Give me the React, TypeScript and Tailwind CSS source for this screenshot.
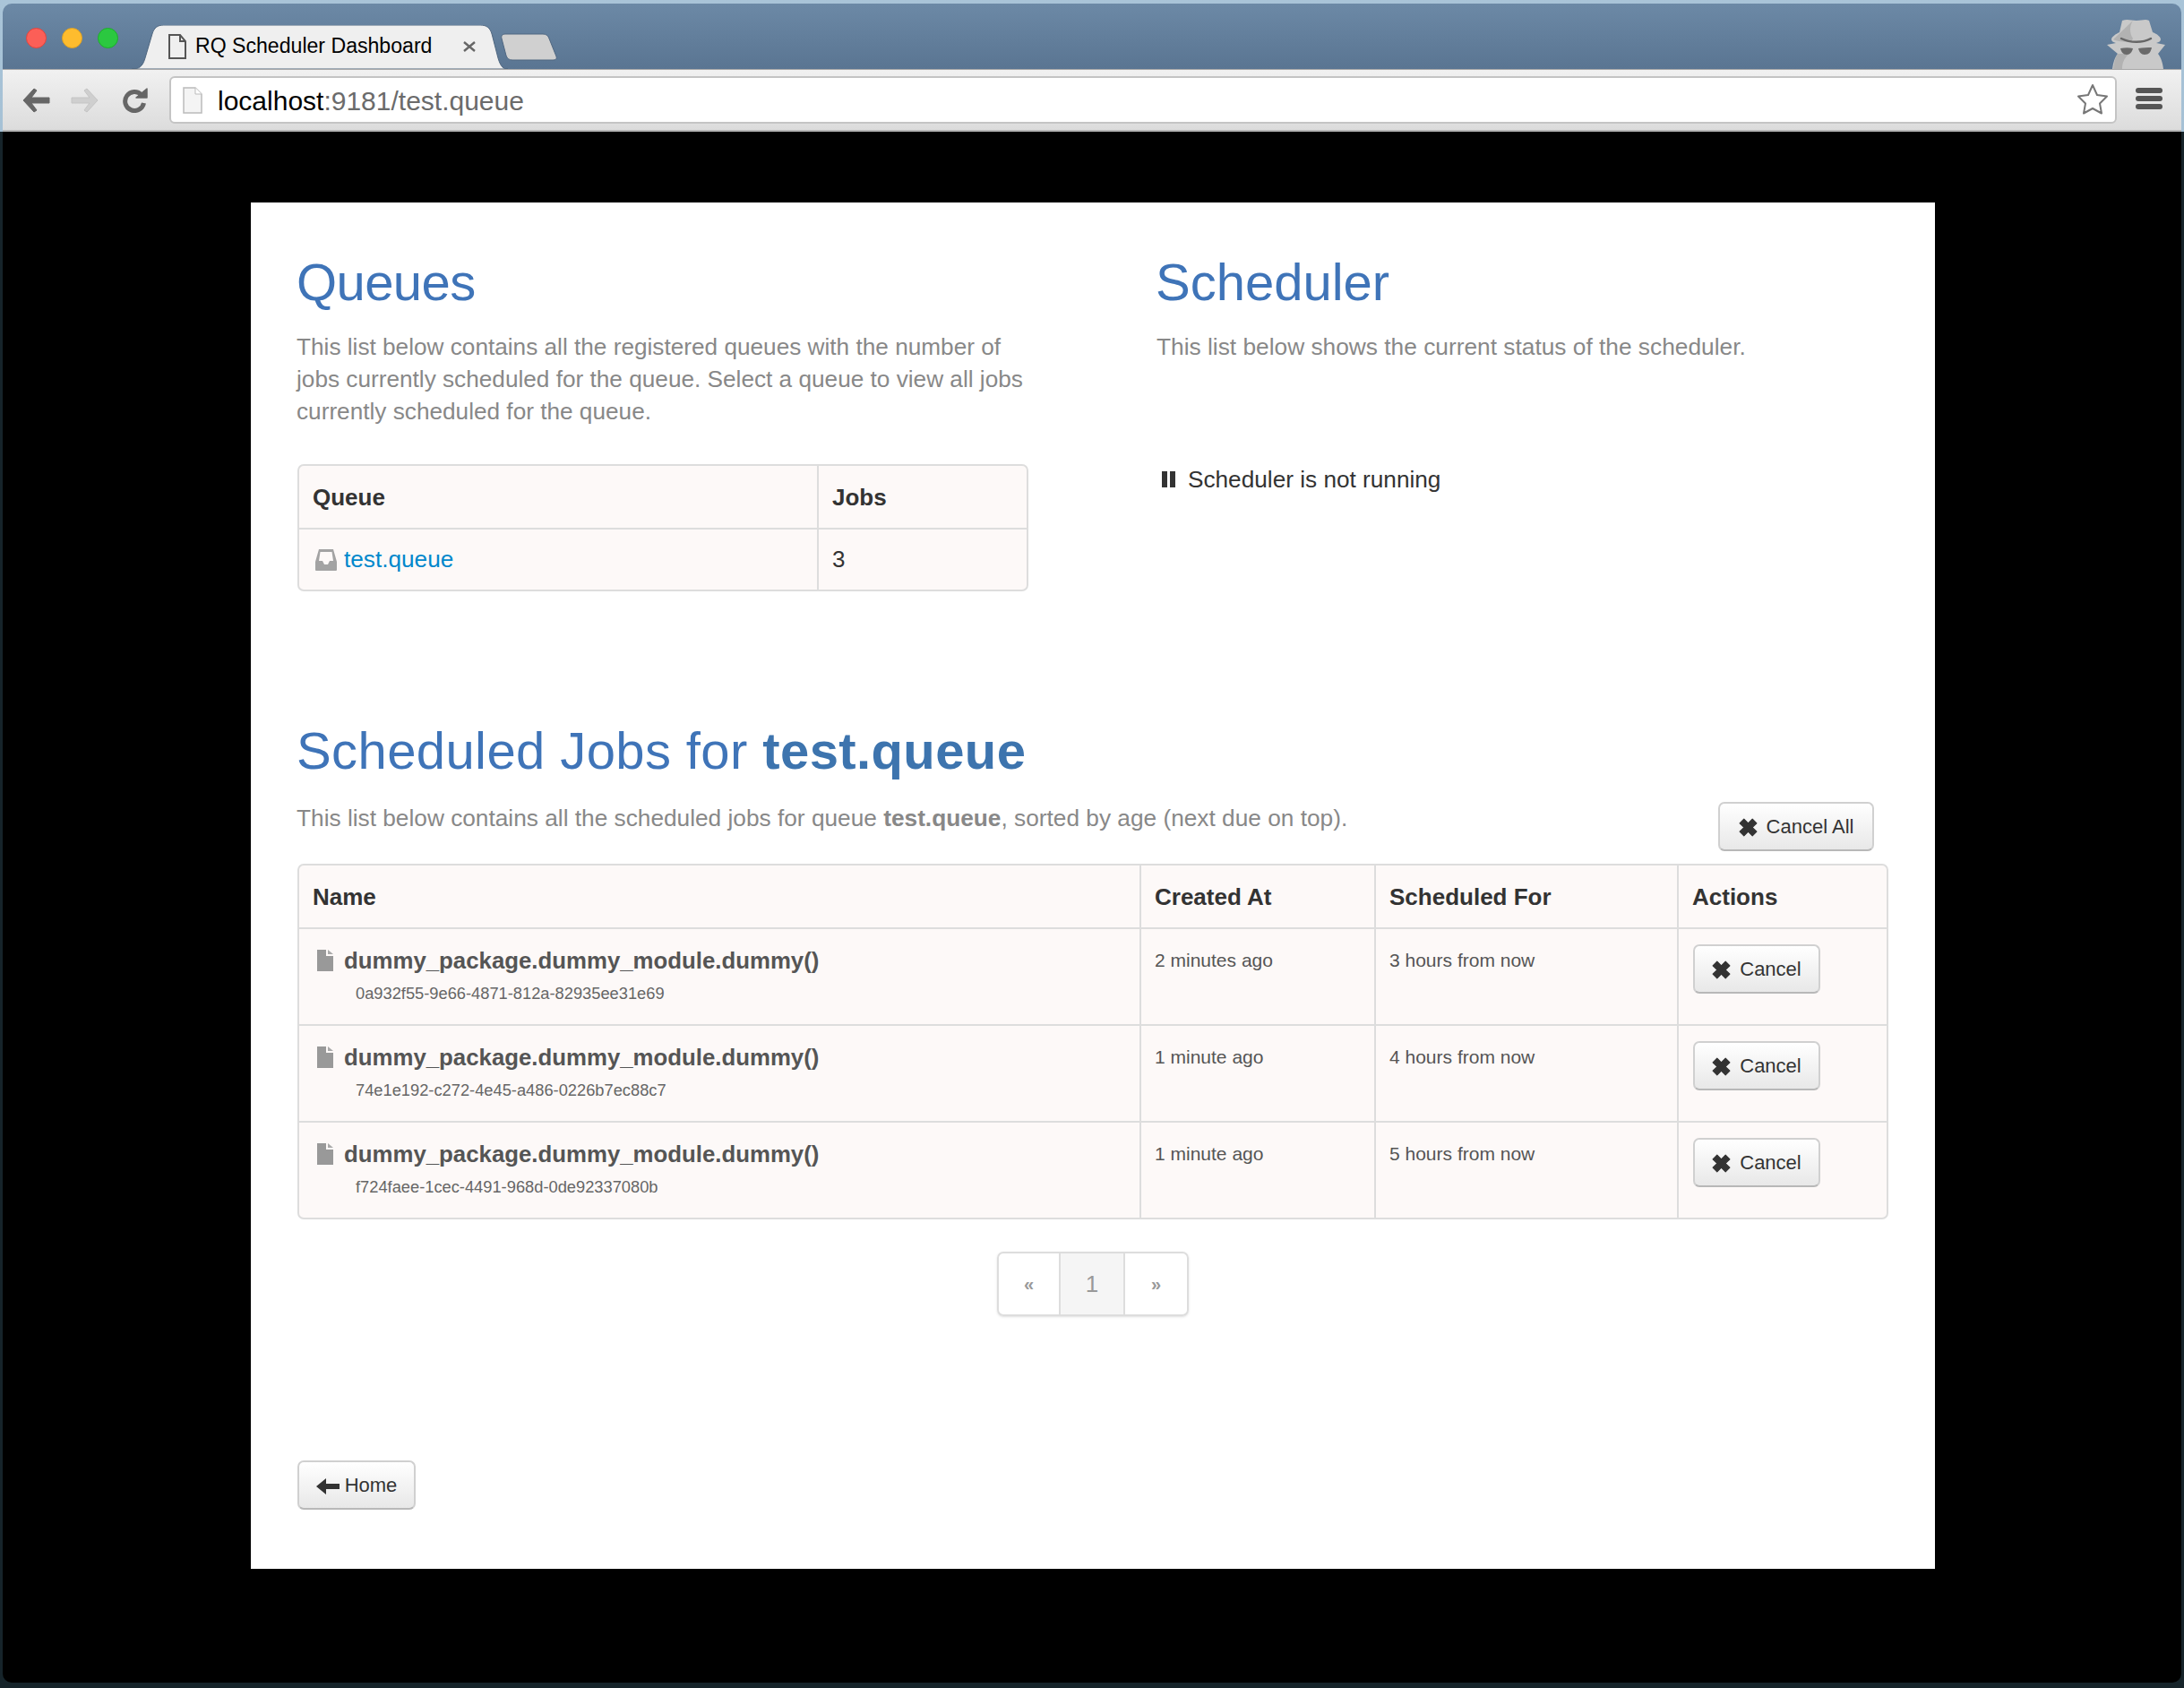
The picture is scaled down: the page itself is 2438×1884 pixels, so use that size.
import React from 'react';

const SANS = "font-['Liberation_Sans',Arial,sans-serif]";

const jobs = [
  { id: '0a932f55-9e66-4871-812a-82935ee31e69', created: '2 minutes ago', due: '3 hours from now' },
  { id: '74e1e192-c272-4e45-a486-0226b7ec88c7', created: '1 minute ago', due: '4 hours from now' },
  { id: 'f724faee-1cec-4491-968d-0de92337080b', created: '1 minute ago', due: '5 hours from now' },
];

const RemoveIcon = () => (
  <svg viewBox="0 0 20 20" className="w-[21px] h-[21px] shrink-0 mt-[2px]" fill="#333">
    <path d="M1 5.500 5.500 1 10 5.500 14.500 1 19 5.500 14.500 10 19 14.500 14.500 19 10 14.500 5.500 19 1 14.500 5.500 10Z" stroke="#333" strokeLinejoin="round" />
  </svg>
);

const FileIcon = () => (
  <svg viewBox="0 0 18 24" className="w-[18px] h-6 shrink-0">
    <path d="M0 0h10v7h8v17H0Z" fill="#999" />
    <path d="M12 0l6 5h-6Z" fill="#aaa" />
  </svg>
);

const InboxIcon = () => (
  <svg viewBox="0 0 24 24" className="w-6 h-6 shrink-0">
    <path fillRule="evenodd" d="M4 0h16l4 14v9a1 1 0 0 1-1 1H1a1 1 0 0 1-1-1V14L4 0Zm1.500 3L4 13h4l2 4h4l2-4h4L18.500 3Z" fill="#a3a3a3" />
  </svg>
);

const Button = ({ icon, label, className }: { icon: React.ReactNode; label: string; className: string }) => (
  <div className={`flex items-center justify-center gap-[10px] h-[55px] rounded-[7px] border-2 border-[#d0d0d0] border-b-[#b8b8b8] bg-gradient-to-b from-white to-[#e8e8e8] text-[22px] text-[#333] ${className}`}>
    {icon}
    <span>{label}</span>
  </div>
);

const Th = ({ children, last }: { children: React.ReactNode; last?: boolean }) => (
  <div className={`flex items-center px-[15px] pt-[2px] text-[26px] font-bold text-[#333] ${last ? '' : 'border-r-2 border-[#ddd]'}`}>{children}</div>
);

const ChromeBar = () => (
  <div className="relative h-[143px] mx-[3px] mt-[4px] rounded-t-[10px] overflow-hidden shrink-0">
    <div className="relative h-[73px] bg-gradient-to-b from-[#6c89a6] to-[#5a7592]">
      <div className="absolute left-[26px] top-[27px] w-[23px] h-[23px] rounded-full bg-[#fc5f57] border border-[#e0443e]" />
      <div className="absolute left-[66px] top-[27px] w-[23px] h-[23px] rounded-full bg-[#febc2e] border border-[#dea123]" />
      <div className="absolute left-[106px] top-[27px] w-[23px] h-[23px] rounded-full bg-[#2bc840] border border-[#1dad2b]" />
      {/* tab */}
      <svg className="absolute left-[144px] top-[24px]" width="420" height="49" viewBox="0 0 422 49" preserveAspectRatio="none">
        <path d="M0 49c8 0 12-2 15-12l8-27C25 3 29 0 36 0h355c7 0 11 3 13 10l7 27c3 10 6 12 11 12Z" fill="#efefef" stroke="#4f6680" strokeWidth="1" />
      </svg>
      <svg className="absolute left-[556px] top-[33px]" width="63" height="31" viewBox="0 0 63 31">
        <path d="M5 1h42c4 0 6 2 7 5l8 20c1 3-1 4-4 4H13c-4 0-6-2-7-5L1 6C0 3 2 1 5 1Z" fill="#d0d0d0" stroke="#4f6680" strokeWidth="1" />
      </svg>
      <svg className="absolute left-[185px] top-[34px]" width="20" height="28" viewBox="0 0 20 28">
        <path d="M1 1h12l6 7v19H1Z M13 1v7h6" fill="none" stroke="#555" strokeWidth="2" />
      </svg>
      <span className={`absolute left-[215px] top-[31px] text-[23.1px] leading-[32px] text-black ${SANS}`}>RQ Scheduler Dashboard</span>
      <svg className="absolute left-[513px] top-[42px]" width="16" height="12" viewBox="0 0 16 12">
        <path d="M2 1l12 10M14 1 2 11" stroke="#666" strokeWidth="2.400" />
      </svg>
      {/* incognito */}
      <svg className="absolute left-[2348px] top-[16px]" width="68" height="57" viewBox="0 0 68 57">
        <path d="M18 3c6-2 10 0 16 0s10-2 14 0l4 13c5 2 9 5 9 8 0 2-2 3-5 4l10 2-8 10c3 4 5 9 6 17H7c1-8 3-13 6-17L1 30l10-2c-3-1-5-2-5-4 0-3 5-6 9-8Z" fill="#c9c9c9" />
        <path d="M30 3c-4 6-4 14 0 20l-2 4c-8 0-17-1-20-3M13 40c-3 4-4 10-5 17h10c0-8 3-13 8-17Z" fill="#b2b2b2" />
        <path d="M17 23c10 5 24 5 33 0" fill="none" stroke="#666" strokeWidth="2.400" strokeLinecap="round" />
        <path d="M16 34c5-1 10-1 14 0-1 4-3 7-7 7s-6-3-7-7ZM36 34c5-1 10-1 15-1-1 5-3 8-8 8-4 0-6-3-7-7Z" fill="#6a6a6a" />
      </svg>
    </div>
    <div className="relative h-[70px] border-t border-[#a8a8a8] bg-gradient-to-b from-[#f1f1f1] to-[#dcdcdc] border-b-2 border-b-[#b5b5b5]">
      <svg className="absolute left-[21px] top-[20px]" width="32" height="28" viewBox="0 0 32 28">
        <path d="M14 1 2 14l12 13 3-2-6-8h20v-6H11l6-8Z" fill="#666" stroke="#666" strokeLinejoin="round" />
      </svg>
      <svg className="absolute left-[76px] top-[20px]" width="32" height="28" viewBox="0 0 32 28">
        <path d="M18 1l12 13-12 13-3-2 6-8H1v-6h20l-6-8Z" fill="#cfcfcf" stroke="#c4c4c4" strokeLinejoin="round" />
      </svg>
      <svg className="absolute left-[134px] top-[20px]" width="28" height="28" viewBox="0 0 28 28">
        <path d="M21 8a10.500 10.500 0 1 0 2.500 9" fill="none" stroke="#666" strokeWidth="5" />
        <path d="M15 11 27 1v10Z" fill="#666" stroke="#666" strokeWidth="1.500" strokeLinejoin="round" />
      </svg>
      <div className={`absolute left-[186px] right-[72px] top-[7px] h-[53px] rounded-[6px] border-2 border-[#c4c4c4] bg-white flex items-center pl-[52px] pt-[1px] text-[30px] text-[#6b6b6b] ${SANS}`}>
        <span className="text-black">localhost</span>:9181/test.queue
      </div>
      <svg className="absolute left-[201px] top-[19px]" width="22" height="30" viewBox="0 0 22 30">
        <path d="M1 1h13l7 7v21H1Z" fill="#f4f4f4" stroke="#bbb" strokeWidth="1.500" />
        <path d="M14 1v7h7" fill="#fff" stroke="#bbb" />
      </svg>
      <svg className="absolute left-[2315px] top-[15px]" width="36" height="36" viewBox="0 0 36 36">
        <path d="M18 2l5 11 11 1.500-8 8 2 11-10-5.500L8 33.500l2-11-8-8L13 13Z" fill="#fff" stroke="#777" strokeWidth="2" strokeLinejoin="round" />
      </svg>
      <div className="absolute left-[2381px] top-[20px] w-[30px] flex flex-col gap-[3px]">
        <div className="h-[6px] rounded-full bg-[#555]" />
        <div className="h-[6px] rounded-full bg-[#555]" />
        <div className="h-[6px] rounded-full bg-[#555]" />
      </div>
    </div>
  </div>
);

export default function App() {
  return (
    <div className={`relative w-[2438px] h-[1884px] overflow-hidden bg-gradient-to-b from-[#a9c4d8] to-[#7d9cb5] ${SANS}`}>
      <div className="absolute inset-x-0 top-[147px] bottom-0 bg-[#16242a]" />
      <div className="relative flex flex-col h-[1878px]">
        <ChromeBar />
        <div className="flex-1 mx-[3px] bg-black rounded-b-[10px] pt-[79px]">
          <div className="ml-[277px] w-[1880px] h-[1525px] bg-white px-[52px] pt-[53px]">
            <div className="flex">
              <div className="w-[959px]">
                <h1 className="ml-[-1px] text-[58px] leading-[72px] tracking-[-0.6px] text-[#3f74b8]">Queues</h1>
                <p className="mt-[18px] w-[824px] ml-[-1px] text-[26.2px] leading-[36px] text-[#888]">
                  This list below contains all the registered queues with the number of jobs currently scheduled for the queue. Select a queue to view all jobs currently scheduled for the queue.
                </p>
                <div className="mt-[41px] w-[816px] h-[142px] rounded-[7px] border-2 border-[#ddd] bg-[#fdf9f8] grid grid-cols-[580px_1fr] grid-rows-[69px_1fr]">
                  <Th>Queue</Th>
                  <Th last>Jobs</Th>
                  <div className="flex items-center gap-[8px] pl-[18px] border-t-2 border-r-2 border-[#ddd] text-[26.2px] text-[#0088cc]">
                    <InboxIcon />
                    <span>test.queue</span>
                  </div>
                  <div className="flex items-center px-[15px] border-t-2 border-[#ddd] text-[26px] text-[#333]">3</div>
                </div>
              </div>
              <div>
                <h1 className="ml-[-1px] text-[58px] leading-[72px] text-[#3f74b8]">Scheduler</h1>
                <p className="mt-[18px] text-[26.3px] leading-[36px] text-[#888]">This list below shows the current status of the scheduler.</p>
                <div className="mt-[112px] flex items-center gap-[14px] pl-[6px] text-[26.2px] leading-[36px] text-[#333]">
                  <div className="flex gap-[3px]">
                    <div className="w-[6px] h-[18px] bg-[#333]" />
                    <div className="w-[6px] h-[18px] bg-[#333]" />
                  </div>
                  <span>Scheduler is not running</span>
                </div>
              </div>
            </div>

            <h1 className="ml-[-1px] mt-[142px] text-[58px] leading-[72px] tracking-[0.4px] text-[#3f74b8]">
              Scheduled Jobs for <strong className="font-bold text-[#3d74ae]">test.queue</strong>
            </h1>

            <div className="flex items-start justify-between pr-[16px]">
              <p className="mt-[21px] ml-[-1px] text-[26.25px] leading-[36px] text-[#888]">
                This list below contains all the scheduled jobs for queue <strong className="font-bold">test.queue</strong>, sorted by age (next due on top).
              </p>
              <Button icon={<RemoveIcon />} label="Cancel All" className="w-[174px] mt-[21px]" />
            </div>

            <div className="mt-[14px] w-[1776px] rounded-[7px] border-2 border-[#ddd] bg-[#fdf9f8]">
              <div className="grid grid-cols-[940px_262px_338px_1fr] h-[69px]">
                <Th>Name</Th>
                <Th>Created At</Th>
                <Th>Scheduled For</Th>
                <Th last>Actions</Th>
              </div>
              {jobs.map((job) => (
                <div key={job.id} className="grid grid-cols-[940px_262px_338px_1fr] h-[108px] border-t-2 border-[#ddd] text-[21px] text-[#555]">
                  <div className="border-r-2 border-[#ddd] pl-[20px] pt-[17px]">
                    <div className="flex items-center gap-[12px] text-[25.8px] leading-[36px] font-bold">
                      <FileIcon />
                      <span>dummy_package.dummy_module.dummy()</span>
                    </div>
                    <div className="pl-[43px] mt-[1px] text-[18.3px] leading-[36px] text-[#666]">{job.id}</div>
                  </div>
                  <div className="border-r-2 border-[#ddd] px-[15px] pt-[17px] leading-[36px]">{job.created}</div>
                  <div className="border-r-2 border-[#ddd] px-[15px] pt-[17px] leading-[36px]">{job.due}</div>
                  <div className="px-[16px] pt-[17px]">
                    <Button icon={<RemoveIcon />} label="Cancel" className="w-[142px]" />
                  </div>
                </div>
              ))}
            </div>

            <div className="mt-[36px] mx-auto w-[214px] h-[72px] rounded-[7px] border-2 border-[#ddd] shadow-sm grid grid-cols-[69px_72px_1fr] text-[#999]">
              <div className="flex items-center justify-center text-[20px] font-bold border-r-2 border-[#ddd]">«</div>
              <div className="flex items-center justify-center text-[26px] border-r-2 border-[#ddd] bg-[#f5f5f5]">1</div>
              <div className="flex items-center justify-center text-[20px] font-bold">»</div>
            </div>

            <Button
              icon={
                <svg viewBox="0 0 26 20" className="w-[26px] h-5 shrink-0 mt-[2px]" fill="#333">
                  <path d="M0 10 11 1v6h15v6H11v6Z" />
                </svg>
              }
              label="Home"
              className="mt-[161px] w-[132px] !gap-[6px]"
            />
          </div>
        </div>
      </div>
    </div>
  );
}
